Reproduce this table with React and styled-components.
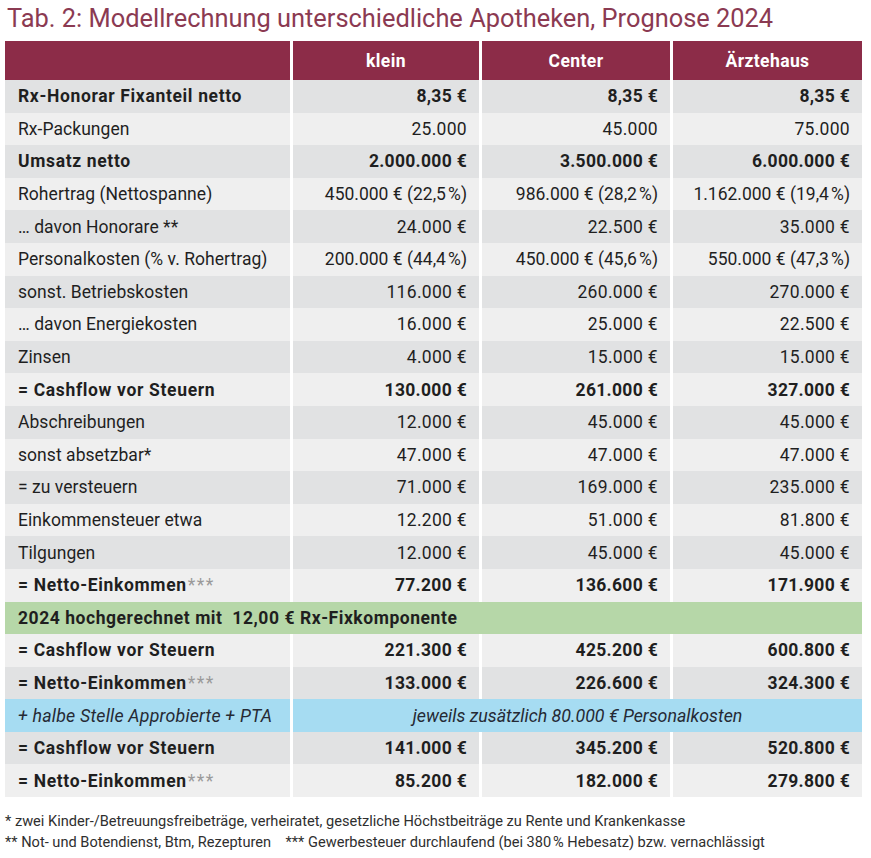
import styled, { createGlobalStyle } from "styled-components";

const GlobalStyle = createGlobalStyle`
  body {
    margin: 0;
    background: #ffffff;
    font-family: Roboto, "Liberation Sans", sans-serif;
    color: #1f1f1f;
  }
`;

const Page = styled.div`
  width: 871px;
  padding: 3px 0 0 5px;
  box-sizing: border-box;
`;

const Title = styled.h1`
  margin: 0 0 7px 2px;
  font-size: 25.4px;
  line-height: 31px;
  font-weight: 400;
  color: #8b3a52;
`;

const Grid = styled.div`
  display: grid;
  width: 857px;
  grid-template-columns: 285px 186px 188px 189px;
  grid-template-rows: 39px repeat(22, 32.6px);
  column-gap: 3px;
`;

const HeadCell = styled.div`
  background: #8c2c48;
  color: #ffffff;
  font-weight: 700;
  font-size: 17.5px;
  letter-spacing: 0.4px;
  display: flex;
  align-items: center;
  justify-content: center;
`;

const Cell = styled.div`
  background: ${(p) => (p.$dark ? "#e1e2e3" : "#efefef")};
  font-size: 17.5px;
  font-weight: ${(p) => (p.$bold ? 700 : 400)};
  display: flex;
  align-items: center;
  justify-content: ${(p) => (p.$num ? "flex-end" : "flex-start")};
  padding: ${(p) => (p.$num ? "0 12px 0 0" : "0 0 0 13px")};
  white-space: nowrap;
  letter-spacing: ${(p) => (p.$num ? "0.3px" : p.$bold ? "0.65px" : "0.05px")};
`;

const Stars = styled.span`
  color: #9a9a9a;
  font-weight: 400;
  letter-spacing: 1.5px;
  margin-left: 1px;
`;

const BandRow = styled.div`
  grid-column: 1 / -1;
  background: #b6d7a8;
  font-size: 17.5px;
  font-weight: 700;
  letter-spacing: 0.55px;
  white-space: pre;
  display: flex;
  align-items: center;
  padding-left: 13px;
`;

const NoteCell = styled.div`
  grid-column: ${(p) => (p.$wide ? "2 / -1" : "auto")};
  background: #a6dcf2;
  font-size: 17.8px;
  font-style: italic;
  letter-spacing: ${(p) => (p.$wide ? "0" : "0.2px")};
  color: #252a35;
  display: flex;
  align-items: center;
  justify-content: ${(p) => (p.$wide ? "center" : "flex-start")};
  padding-left: ${(p) => (p.$wide ? "0" : "13px")};
`;

const Footnotes = styled.div`
  margin-top: 14px;
  font-size: 14.6px;
  line-height: 21px;
  color: #2f2f2f;
  white-space: pre;
`;

const P = "\u202F%";

const rows = [
  { label: "Rx-Honorar Fixanteil netto", v: ["8,35 €", "8,35 €", "8,35 €"], bold: true },
  { label: "Rx-Packungen", v: ["25.000", "45.000", "75.000"] },
  { label: "Umsatz netto", v: ["2.000.000 €", "3.500.000 €", "6.000.000 €"], bold: true },
  { label: "Rohertrag (Nettospanne)", v: [`450.000 € (22,5${P})`, `986.000 € (28,2${P})`, `1.162.000 € (19,4${P})`] },
  { label: "… davon Honorare **", v: ["24.000 €", "22.500 €", "35.000 €"] },
  { label: "Personalkosten (% v. Rohertrag)", v: [`200.000 € (44,4${P})`, `450.000 € (45,6${P})`, `550.000 € (47,3${P})`] },
  { label: "sonst. Betriebskosten", v: ["116.000 €", "260.000 €", "270.000 €"] },
  { label: "… davon Energiekosten", v: ["16.000 €", "25.000 €", "22.500 €"] },
  { label: "Zinsen", v: ["4.000 €", "15.000 €", "15.000 €"] },
  { label: "= Cashflow vor Steuern", v: ["130.000 €", "261.000 €", "327.000 €"], bold: true },
  { label: "Abschreibungen", v: ["12.000 €", "45.000 €", "45.000 €"] },
  { label: "sonst absetzbar*", v: ["47.000 €", "47.000 €", "47.000 €"] },
  { label: "= zu versteuern", v: ["71.000 €", "169.000 €", "235.000 €"] },
  { label: "Einkommensteuer etwa", v: ["12.200 €", "51.000 €", "81.800 €"] },
  { label: "Tilgungen", v: ["12.000 €", "45.000 €", "45.000 €"] },
  { label: "= Netto-Einkommen", stars: true, v: ["77.200 €", "136.600 €", "171.900 €"], bold: true },
  { band: "2024 hochgerechnet mit  12,00 € Rx-Fixkomponente" },
  { label: "= Cashflow vor Steuern", v: ["221.300 €", "425.200 €", "600.800 €"], bold: true },
  { label: "= Netto-Einkommen", stars: true, v: ["133.000 €", "226.600 €", "324.300 €"], bold: true },
  { note: ["+ halbe Stelle Approbierte + PTA", "jeweils zusätzlich 80.000 € Personalkosten"] },
  { label: "= Cashflow vor Steuern", v: ["141.000 €", "345.200 €", "520.800 €"], bold: true },
  { label: "= Netto-Einkommen", stars: true, v: ["85.200 €", "182.000 €", "279.800 €"], bold: true },
];

const renderRow = (row, i) => {
  const dark = i % 2 === 0;
  if (row.band) {
    return <BandRow key={i}>{row.band}</BandRow>;
  }
  if (row.note) {
    return [
      <NoteCell key={`${i}a`}>{row.note[0]}</NoteCell>,
      <NoteCell key={`${i}b`} $wide>{row.note[1]}</NoteCell>,
    ];
  }
  return [
    <Cell key={`${i}l`} $dark={dark} $bold={row.bold}>
      {row.label}
      {row.stars && <Stars>***</Stars>}
    </Cell>,
    ...row.v.map((val, j) => (
      <Cell key={`${i}v${j}`} $dark={dark} $bold={row.bold} $num>
        {val}
      </Cell>
    )),
  ];
};

export default function App() {
  return (
    <Page>
      <GlobalStyle />
      <Title>Tab. 2: Modellrechnung unterschiedliche Apotheken, Prognose 2024</Title>
      <Grid>
        <HeadCell />
        <HeadCell>klein</HeadCell>
        <HeadCell>Center</HeadCell>
        <HeadCell>Ärztehaus</HeadCell>
        {rows.map(renderRow)}
      </Grid>
      <Footnotes>
        <div>* zwei Kinder-/Betreuungsfreibeträge, verheiratet, gesetzliche Höchstbeiträge zu Rente und Krankenkasse</div>
        <div>{"** Not- und Botendienst, Btm, Rezepturen    *** Gewerbesteuer durchlaufend (bei 380\u202F% Hebesatz) bzw. vernachlässigt"}</div>
      </Footnotes>
    </Page>
  );
}
